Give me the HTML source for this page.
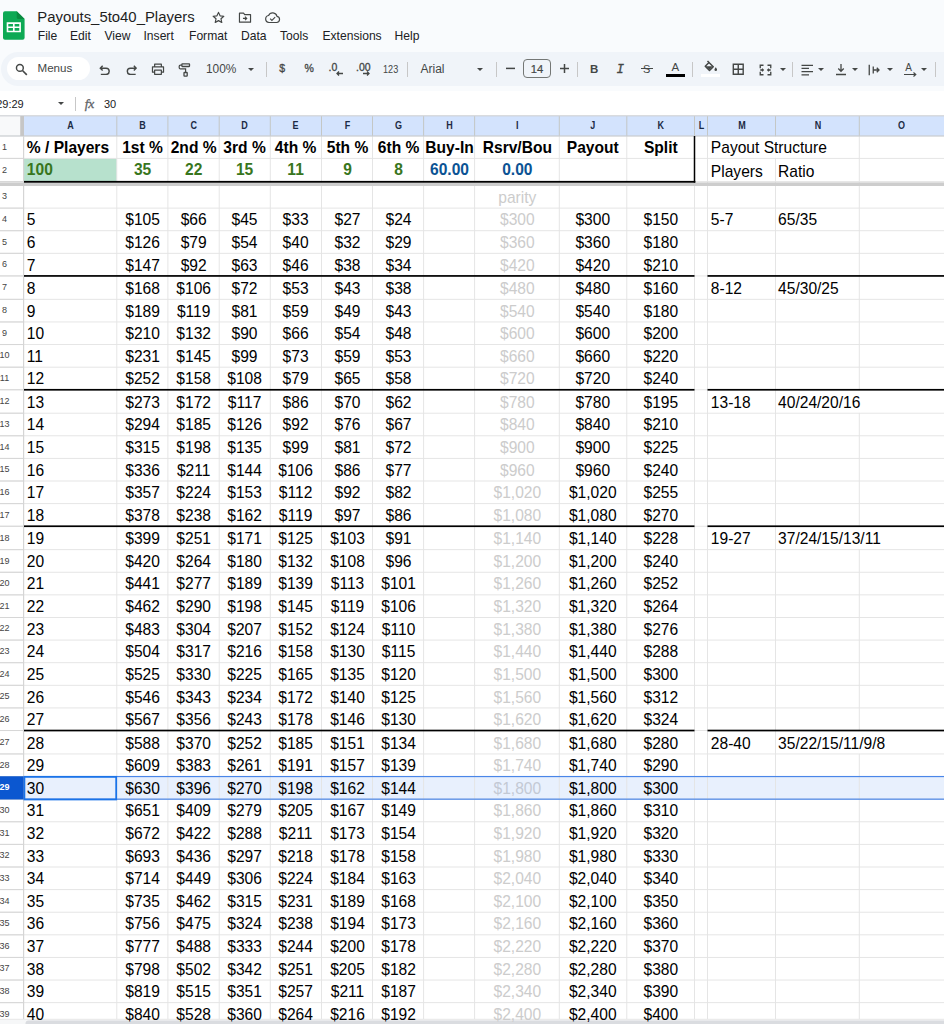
<!DOCTYPE html>
<html lang="en"><head><meta charset="utf-8"><title>Payouts_5to40_Players</title>
<style>
html,body{margin:0;padding:0}
body{width:944px;height:1024px;overflow:hidden;background:#f9fbfd;font-family:"Liberation Sans",sans-serif;position:relative;color:#000}
.abs{position:absolute}
.title{left:37.3px;top:7.5px;font-size:14.9px;color:#1f1f1f;white-space:nowrap;line-height:18px}
.menu{top:28.6px;font-size:12.1px;color:#202124;white-space:nowrap;line-height:14px}
.tb{font-size:11.6px;color:#444746;white-space:nowrap;line-height:14px}
.dd{width:0;height:0;border-left:3.3px solid transparent;border-right:3.3px solid transparent;border-top:3.6px solid #444746}
.sep{top:62px;width:1px;height:15px;background:#c7c7c7}
#grid{position:absolute;left:0;top:0}
.c{position:absolute;font-size:16.4px;transform:scaleX(0.95);line-height:22.61px;height:22.61px;white-space:nowrap;box-sizing:border-box}
.ac{text-align:center;transform-origin:50% 50%}
.al{text-align:left;padding-left:3px;transform-origin:0 50%}
.ar{text-align:right;padding-right:3px}
.b{font-weight:bold}
.ch{position:absolute;top:118.5px;height:14px;line-height:14px;transform:scaleX(0.9);font-size:10px;font-weight:bold;color:#1b2b45;text-align:center}
.rh{position:absolute;left:-8px;width:25px;height:14px;line-height:14px;font-size:9.8px;color:#444;text-align:center;transform:scaleX(0.92);margin-top:-0.4px}
.rs{color:#fff;font-weight:bold}
</style></head><body>
<!-- title bar -->
<svg class="abs" style="left:3.4px;top:10.5px" width="21.6" height="29" viewBox="0 0 44 58">
  <path d="M4 0h24l16 16v38a4 4 0 0 1-4 4H4a4 4 0 0 1-4-4V4a4 4 0 0 1 4-4z" fill="#0da954"/>
  <path d="M28 0l16 16H32a4 4 0 0 1-4-4z" fill="#0a8a40"/>
  <path d="M7.5 22.5h29v20.5h-29zM10.8 25.8v5.4h9.5v-5.4zM23.7 25.8v5.4h9.5v-5.4zM10.8 34.3v5.4h9.5v-5.4zM23.7 34.3v5.4h9.5v-5.4z" fill="#fff" fill-rule="evenodd"/>
</svg>
<div class="abs title">Payouts_5to40_Players</div>
<!-- star -->
<svg class="abs" style="left:211px;top:10px" width="15" height="15" viewBox="0 0 24 24"><path d="M12 3.8l2.5 5.5 6 .700-4.5 4.1 1.25 5.9L12 17l-5.25 3 1.25-5.9L3.5 10l6-.700z" fill="none" stroke="#444746" stroke-width="1.9" stroke-linejoin="round"/></svg>
<!-- move folder -->
<svg class="abs" style="left:238px;top:11px" width="14" height="13" viewBox="0 0 24 22"><path d="M2.5 3.5h7l2 2.5h10v13h-19z" fill="none" stroke="#444746" stroke-width="2" stroke-linejoin="round"/><path d="M8.5 12.5h6m-2.5-3l3 3-3 3" fill="none" stroke="#444746" stroke-width="1.9"/></svg>
<!-- cloud -->
<svg class="abs" style="left:264px;top:11px" width="17" height="13" viewBox="0 0 28 22"><path d="M8 19.5a6 6 0 0 1-.600-11.9 7.5 7.5 0 0 1 14.2 1.4 5.3 5.3 0 0 1-.600 10.5z" fill="none" stroke="#444746" stroke-width="2" stroke-linejoin="round"/><path d="M10 13l3 3 5.5-5.5" fill="none" stroke="#444746" stroke-width="1.9"/></svg>
<div class="abs menu" style="left:37.8px">File</div>
<div class="abs menu" style="left:70px">Edit</div>
<div class="abs menu" style="left:104.5px">View</div>
<div class="abs menu" style="left:143.5px">Insert</div>
<div class="abs menu" style="left:189px">Format</div>
<div class="abs menu" style="left:241px">Data</div>
<div class="abs menu" style="left:280px">Tools</div>
<div class="abs menu" style="left:322.5px">Extensions</div>
<div class="abs menu" style="left:394.5px">Help</div>
<!-- toolbar -->
<div class="abs" style="left:0.5px;top:52px;width:980px;height:34px;border-radius:17px;background:#f0f4f9"></div>
<div class="abs" style="left:6.8px;top:57px;width:83.5px;height:23.2px;border-radius:12px;background:#fff"></div>
<svg class="abs" style="left:15.2px;top:62.8px" width="13" height="13" viewBox="0 0 24 24"><circle cx="9" cy="9" r="6.3" fill="none" stroke="#444746" stroke-width="2.7"/><path d="M13.8 13.8l8 8" stroke="#444746" stroke-width="3"/></svg>
<div class="abs tb" style="left:37.5px;top:61px;">Menus</div>
<!-- undo -->
<svg class="abs" style="left:99px;top:63.8px" width="11.5" height="11.5" viewBox="0 0 22 22"><path d="M7 3.5L2.5 8 7 12.5M3 8h10.5a6 6 0 0 1 0 12H3.5" fill="none" stroke="#444746" stroke-width="2.7"/></svg>
<!-- redo -->
<svg class="abs" style="left:125.5px;top:63.8px" width="11.5" height="11.5" viewBox="0 0 22 22"><path d="M15 3.5L19.5 8 15 12.5M19 8H8.5a6 6 0 0 0 0 12h10" fill="none" stroke="#444746" stroke-width="2.7"/></svg>
<!-- print -->
<svg class="abs" style="left:151.3px;top:63.2px" width="14" height="12.5" viewBox="0 0 28 26"><path d="M7 8V2.5h14V8M7 19H2.5V8h23v11H21M7 15h14v8.5H7z" fill="none" stroke="#444746" stroke-width="2.5" stroke-linejoin="round"/></svg>
<!-- paint format -->
<svg class="abs" style="left:178px;top:62px" width="14" height="16" viewBox="0 0 14 16"><rect x="3.9" y="1.8" width="7.6" height="2.7" rx="0.4" fill="none" stroke="#444746" stroke-width="1.3"/><path d="M3.9 3.1H2.4a1.2 1.2 0 0 0-1.2 1.2v1.4a1.2 1.2 0 0 0 1.2 1.2h5.2v3.3" fill="none" stroke="#444746" stroke-width="1.2"/><rect x="6" y="10.5" width="3.2" height="3.7" rx="0.5" fill="none" stroke="#444746" stroke-width="1.3"/></svg>
<div class="abs tb" style="left:206px;top:62px;font-size:11.9px">100%</div>
<div class="abs dd" style="left:247.5px;top:67.8px"></div>
<div class="abs sep" style="left:265.5px"></div>
<div class="abs tb" style="left:279.3px;top:60.5px;font-size:10.5px;-webkit-text-stroke:0.3px #444746">$</div>
<div class="abs tb" style="left:304.5px;top:60.5px;font-size:10.5px;-webkit-text-stroke:0.3px #444746">%</div>
<div class="abs tb" style="left:328.5px;top:60px;font-size:10.5px;-webkit-text-stroke:0.3px #444746">.0</div>
<svg class="abs" style="left:335.5px;top:70.8px" width="7" height="5" viewBox="0 0 14 10"><path d="M14 5H2.5M6 1L2 5l4 4" fill="none" stroke="#444746" stroke-width="2.6"/></svg>
<div class="abs tb" style="left:356px;top:60px;font-size:10.5px;-webkit-text-stroke:0.3px #444746">.00</div>
<svg class="abs" style="left:363.2px;top:70.8px" width="7" height="5" viewBox="0 0 14 10"><path d="M0 5h11.5M8 1l4 4-4 4" fill="none" stroke="#444746" stroke-width="2.6"/></svg>
<div class="abs tb" style="left:382.5px;top:62px;font-size:10.6px;transform:scaleX(0.86);transform-origin:0 50%">123</div>
<div class="abs sep" style="left:407px"></div>
<div class="abs tb" style="left:420.5px;top:61.5px;font-size:12px">Arial</div>
<div class="abs dd" style="left:476.6px;top:67.8px"></div>
<div class="abs sep" style="left:495.8px"></div>
<svg class="abs" style="left:505px;top:63px" width="11" height="11" viewBox="0 0 11 11"><path d="M1 5.4h9" stroke="#444746" stroke-width="1.5"/></svg>
<div class="abs" style="left:523px;top:58.8px;width:28px;height:19.7px;border:1px solid #747775;border-radius:4px;box-sizing:border-box"></div>
<div class="abs tb" style="left:523px;top:62px;width:28px;text-align:center;font-size:11.2px;-webkit-text-stroke:0.2px #444746">14</div>
<svg class="abs" style="left:558.5px;top:63px" width="11" height="11" viewBox="0 0 11 11"><path d="M1 5.4h9M5.5 0.9v9" stroke="#444746" stroke-width="1.5"/></svg>
<div class="abs sep" style="left:576.8px"></div>
<div class="abs tb" style="left:590px;top:61.5px;font-size:11.5px;font-weight:bold">B</div>
<div class="abs tb" style="left:616.5px;top:63px;font-size:12.5px;font-style:italic;font-family:'Liberation Mono',monospace;-webkit-text-stroke:0.35px #444746">I</div>
<div class="abs tb" style="left:643px;top:61.5px;font-size:11px">S</div>
<div class="abs" style="left:640.5px;top:68.3px;width:12.5px;height:1.2px;background:#444746"></div>
<div class="abs tb" style="left:671.5px;top:59.5px;font-size:11.5px">A</div>
<div class="abs" style="left:665.5px;top:74px;width:19px;height:2.5px;background:#000"></div>
<div class="abs sep" style="left:692px"></div>
<!-- fill -->
<svg class="abs" style="left:703.5px;top:60px" width="14" height="12" viewBox="0 0 28 24"><path d="M7 2l11.5 11.5-7.5 7.5-8.5-8.5 8.5-8.5" fill="none" stroke="#444746" stroke-width="3" stroke-linejoin="round"/><path d="M3 12.5h15l-7 7z" fill="#444746"/><path d="M23.5 14.5c1.8 2.5 2.6 3.8 2.6 5a2.6 2.6 0 0 1-5.2 0c0-1.2.8-2.5 2.6-5z" fill="#444746"/></svg>
<div class="abs" style="left:701px;top:74px;width:19px;height:2.5px;background:#fff"></div>
<!-- borders -->
<svg class="abs" style="left:732px;top:63px" width="12.5" height="12.5" viewBox="0 0 24 24"><path d="M2.5 2.5h19v19h-19zM12 2.5v19M2.5 12h19" fill="none" stroke="#444746" stroke-width="2.7"/></svg>
<!-- merge -->
<svg class="abs" style="left:759px;top:63.5px" width="13" height="12" viewBox="0 0 26 24"><path d="M9 2.5H2.5v6M17 2.5h6.5v6M9 21.5H2.5v-6M17 21.5h6.5v-6M2.5 12h6m-2.5-2.5l2.5 2.5-2.5 2.5M23.5 12h-6m2.5-2.5l-2.5 2.5 2.5 2.5" fill="none" stroke="#444746" stroke-width="2.7"/></svg>
<div class="abs dd" style="left:779.5px;top:67.8px"></div>
<div class="abs sep" style="left:792px"></div>
<!-- halign -->
<svg class="abs" style="left:800.5px;top:63.5px" width="12.5" height="12" viewBox="0 0 25 24"><path d="M1 2.5h23M1 8.8h15M1 15.2h23M1 21.5h15" stroke="#444746" stroke-width="2.5"/></svg>
<div class="abs dd" style="left:817.5px;top:67.8px"></div>
<!-- valign -->
<svg class="abs" style="left:835px;top:63px" width="12" height="13" viewBox="0 0 24 26"><path d="M12 2v14M6.5 11l5.5 5.5 5.5-5.5M2 23h20" fill="none" stroke="#444746" stroke-width="2.6"/></svg>
<div class="abs dd" style="left:852px;top:67.8px"></div>
<!-- wrap -->
<svg class="abs" style="left:868px;top:63.5px" width="12" height="12" viewBox="0 0 24 24"><path d="M2.5 1.5v21M10.5 5v14M10.5 12h11M17.5 7.5l4.5 4.5-4.5 4.5" fill="none" stroke="#444746" stroke-width="2.6"/></svg>
<div class="abs dd" style="left:886.5px;top:67.8px"></div>
<!-- rotate -->
<div class="abs tb" style="left:905.3px;top:61.3px;font-size:10px">A</div>
<svg class="abs" style="left:903.5px;top:71.5px" width="13" height="5" viewBox="0 0 26 10"><path d="M0 5h23M19 1l4.5 4-4.5 4" fill="none" stroke="#444746" stroke-width="2.4"/></svg>
<div class="abs dd" style="left:921px;top:67.8px"></div>
<div class="abs sep" style="left:935px"></div>
<!-- formula bar -->
<div class="abs" style="left:0;top:90.8px;width:944px;height:25px;background:#fff"></div>
<div class="abs tb" style="left:-3.8px;top:97px;font-size:11px;color:#202124">29:29</div>
<div class="abs dd" style="left:57.5px;top:102px"></div>
<div class="abs" style="left:74.5px;top:96.5px;width:1px;height:14.5px;background:#c7c7c7"></div>
<div class="abs" style="left:84.8px;top:96px;font:italic 13.5px 'Liberation Serif',serif;color:#5f6368;letter-spacing:-0.3px;-webkit-text-stroke:0.3px #5f6368">fx</div>
<div class="abs tb" style="left:104px;top:97px;font-size:11px;color:#202124">30</div>

<svg id="grid" width="944" height="1024" viewBox="0 0 944 1024">
<rect x="0.00" y="116.00" width="944.00" height="908.00" fill="#ffffff" />
<rect x="0.00" y="116.00" width="20.00" height="908.00" fill="#ffffff" />
<rect x="0.00" y="116.00" width="20.00" height="20.00" fill="#f8f9fa" />
<rect x="24.00" y="116.00" width="920.00" height="20.00" fill="#d3e3fd" />
<rect x="24.00" y="158.40" width="92.80" height="22.80" fill="#b7e1cd" />
<rect x="24.00" y="776.55" width="920.00" height="22.61" fill="#e8f0fd" />
<rect x="0.00" y="157.93" width="944.00" height="0.95" fill="#e4e4e4"/>
<rect x="0.00" y="157.90" width="23.50" height="1.00" fill="#d6d6d6"/>
<rect x="0.00" y="181.12" width="944.00" height="0.95" fill="#e4e4e4"/>
<rect x="0.00" y="181.10" width="23.50" height="1.00" fill="#d6d6d6"/>
<rect x="0.00" y="207.62" width="944.00" height="0.95" fill="#e4e4e4"/>
<rect x="0.00" y="207.60" width="23.50" height="1.00" fill="#d6d6d6"/>
<rect x="0.00" y="230.23" width="944.00" height="0.95" fill="#e4e4e4"/>
<rect x="0.00" y="230.21" width="23.50" height="1.00" fill="#d6d6d6"/>
<rect x="0.00" y="252.84" width="944.00" height="0.95" fill="#e4e4e4"/>
<rect x="0.00" y="252.82" width="23.50" height="1.00" fill="#d6d6d6"/>
<rect x="0.00" y="275.45" width="944.00" height="0.95" fill="#e4e4e4"/>
<rect x="0.00" y="275.43" width="23.50" height="1.00" fill="#d6d6d6"/>
<rect x="0.00" y="298.86" width="944.00" height="0.95" fill="#e4e4e4"/>
<rect x="0.00" y="298.84" width="23.50" height="1.00" fill="#d6d6d6"/>
<rect x="0.00" y="321.47" width="944.00" height="0.95" fill="#e4e4e4"/>
<rect x="0.00" y="321.45" width="23.50" height="1.00" fill="#d6d6d6"/>
<rect x="0.00" y="344.08" width="944.00" height="0.95" fill="#e4e4e4"/>
<rect x="0.00" y="344.06" width="23.50" height="1.00" fill="#d6d6d6"/>
<rect x="0.00" y="366.69" width="944.00" height="0.95" fill="#e4e4e4"/>
<rect x="0.00" y="366.67" width="23.50" height="1.00" fill="#d6d6d6"/>
<rect x="0.00" y="389.31" width="944.00" height="0.95" fill="#e4e4e4"/>
<rect x="0.00" y="389.28" width="23.50" height="1.00" fill="#d6d6d6"/>
<rect x="0.00" y="412.72" width="944.00" height="0.95" fill="#e4e4e4"/>
<rect x="0.00" y="412.69" width="23.50" height="1.00" fill="#d6d6d6"/>
<rect x="0.00" y="435.32" width="944.00" height="0.95" fill="#e4e4e4"/>
<rect x="0.00" y="435.30" width="23.50" height="1.00" fill="#d6d6d6"/>
<rect x="0.00" y="457.93" width="944.00" height="0.95" fill="#e4e4e4"/>
<rect x="0.00" y="457.91" width="23.50" height="1.00" fill="#d6d6d6"/>
<rect x="0.00" y="480.54" width="944.00" height="0.95" fill="#e4e4e4"/>
<rect x="0.00" y="480.52" width="23.50" height="1.00" fill="#d6d6d6"/>
<rect x="0.00" y="503.15" width="944.00" height="0.95" fill="#e4e4e4"/>
<rect x="0.00" y="503.13" width="23.50" height="1.00" fill="#d6d6d6"/>
<rect x="0.00" y="525.76" width="944.00" height="0.95" fill="#e4e4e4"/>
<rect x="0.00" y="525.74" width="23.50" height="1.00" fill="#d6d6d6"/>
<rect x="0.00" y="549.17" width="944.00" height="0.95" fill="#e4e4e4"/>
<rect x="0.00" y="549.15" width="23.50" height="1.00" fill="#d6d6d6"/>
<rect x="0.00" y="571.78" width="944.00" height="0.95" fill="#e4e4e4"/>
<rect x="0.00" y="571.76" width="23.50" height="1.00" fill="#d6d6d6"/>
<rect x="0.00" y="594.39" width="944.00" height="0.95" fill="#e4e4e4"/>
<rect x="0.00" y="594.37" width="23.50" height="1.00" fill="#d6d6d6"/>
<rect x="0.00" y="617.00" width="944.00" height="0.95" fill="#e4e4e4"/>
<rect x="0.00" y="616.98" width="23.50" height="1.00" fill="#d6d6d6"/>
<rect x="0.00" y="639.61" width="944.00" height="0.95" fill="#e4e4e4"/>
<rect x="0.00" y="639.59" width="23.50" height="1.00" fill="#d6d6d6"/>
<rect x="0.00" y="662.22" width="944.00" height="0.95" fill="#e4e4e4"/>
<rect x="0.00" y="662.20" width="23.50" height="1.00" fill="#d6d6d6"/>
<rect x="0.00" y="684.83" width="944.00" height="0.95" fill="#e4e4e4"/>
<rect x="0.00" y="684.81" width="23.50" height="1.00" fill="#d6d6d6"/>
<rect x="0.00" y="707.44" width="944.00" height="0.95" fill="#e4e4e4"/>
<rect x="0.00" y="707.42" width="23.50" height="1.00" fill="#d6d6d6"/>
<rect x="0.00" y="730.05" width="944.00" height="0.95" fill="#e4e4e4"/>
<rect x="0.00" y="730.03" width="23.50" height="1.00" fill="#d6d6d6"/>
<rect x="0.00" y="753.47" width="944.00" height="0.95" fill="#e4e4e4"/>
<rect x="0.00" y="753.44" width="23.50" height="1.00" fill="#d6d6d6"/>
<rect x="0.00" y="776.08" width="944.00" height="0.95" fill="#e4e4e4"/>
<rect x="0.00" y="776.05" width="23.50" height="1.00" fill="#d6d6d6"/>
<rect x="0.00" y="798.69" width="944.00" height="0.95" fill="#e4e4e4"/>
<rect x="0.00" y="798.66" width="23.50" height="1.00" fill="#d6d6d6"/>
<rect x="0.00" y="821.30" width="944.00" height="0.95" fill="#e4e4e4"/>
<rect x="0.00" y="821.27" width="23.50" height="1.00" fill="#d6d6d6"/>
<rect x="0.00" y="843.90" width="944.00" height="0.95" fill="#e4e4e4"/>
<rect x="0.00" y="843.88" width="23.50" height="1.00" fill="#d6d6d6"/>
<rect x="0.00" y="866.51" width="944.00" height="0.95" fill="#e4e4e4"/>
<rect x="0.00" y="866.49" width="23.50" height="1.00" fill="#d6d6d6"/>
<rect x="0.00" y="889.12" width="944.00" height="0.95" fill="#e4e4e4"/>
<rect x="0.00" y="889.10" width="23.50" height="1.00" fill="#d6d6d6"/>
<rect x="0.00" y="911.74" width="944.00" height="0.95" fill="#e4e4e4"/>
<rect x="0.00" y="911.71" width="23.50" height="1.00" fill="#d6d6d6"/>
<rect x="0.00" y="934.35" width="944.00" height="0.95" fill="#e4e4e4"/>
<rect x="0.00" y="934.32" width="23.50" height="1.00" fill="#d6d6d6"/>
<rect x="0.00" y="956.96" width="944.00" height="0.95" fill="#e4e4e4"/>
<rect x="0.00" y="956.93" width="23.50" height="1.00" fill="#d6d6d6"/>
<rect x="0.00" y="979.57" width="944.00" height="0.95" fill="#e4e4e4"/>
<rect x="0.00" y="979.54" width="23.50" height="1.00" fill="#d6d6d6"/>
<rect x="0.00" y="1002.18" width="944.00" height="0.95" fill="#e4e4e4"/>
<rect x="0.00" y="1002.15" width="23.50" height="1.00" fill="#d6d6d6"/>
<rect x="0.00" y="1024.79" width="944.00" height="0.95" fill="#e4e4e4"/>
<rect x="0.00" y="1024.76" width="23.50" height="1.00" fill="#d6d6d6"/>
<rect x="116.33" y="136.00" width="0.95" height="888.00" fill="#e4e4e4"/>
<rect x="167.43" y="136.00" width="0.95" height="888.00" fill="#e4e4e4"/>
<rect x="218.72" y="136.00" width="0.95" height="888.00" fill="#e4e4e4"/>
<rect x="269.82" y="136.00" width="0.95" height="888.00" fill="#e4e4e4"/>
<rect x="321.02" y="136.00" width="0.95" height="888.00" fill="#e4e4e4"/>
<rect x="372.02" y="136.00" width="0.95" height="888.00" fill="#e4e4e4"/>
<rect x="423.12" y="136.00" width="0.95" height="888.00" fill="#e4e4e4"/>
<rect x="474.12" y="136.00" width="0.95" height="888.00" fill="#e4e4e4"/>
<rect x="558.82" y="136.00" width="0.95" height="888.00" fill="#e4e4e4"/>
<rect x="626.32" y="136.00" width="0.95" height="888.00" fill="#e4e4e4"/>
<rect x="694.02" y="136.00" width="0.95" height="888.00" fill="#e4e4e4"/>
<rect x="707.02" y="136.00" width="0.95" height="888.00" fill="#e4e4e4"/>
<rect x="775.02" y="136.00" width="0.95" height="888.00" fill="#e4e4e4"/>
<rect x="858.82" y="136.00" width="0.95" height="888.00" fill="#e4e4e4"/>
<rect x="774.50" y="136.60" width="2.00" height="21.20" fill="#ffffff" />
<rect x="858.30" y="390.38" width="2.00" height="22.21" fill="#ffffff" />
<rect x="858.30" y="526.84" width="2.00" height="22.21" fill="#ffffff" />
<rect x="858.30" y="731.13" width="2.00" height="22.21" fill="#ffffff" />
<rect x="116.30" y="116.00" width="1.00" height="20.00" fill="#c4c7c5"/>
<rect x="167.40" y="116.00" width="1.00" height="20.00" fill="#c4c7c5"/>
<rect x="218.70" y="116.00" width="1.00" height="20.00" fill="#c4c7c5"/>
<rect x="269.80" y="116.00" width="1.00" height="20.00" fill="#c4c7c5"/>
<rect x="321.00" y="116.00" width="1.00" height="20.00" fill="#c4c7c5"/>
<rect x="372.00" y="116.00" width="1.00" height="20.00" fill="#c4c7c5"/>
<rect x="423.10" y="116.00" width="1.00" height="20.00" fill="#c4c7c5"/>
<rect x="474.10" y="116.00" width="1.00" height="20.00" fill="#c4c7c5"/>
<rect x="558.80" y="116.00" width="1.00" height="20.00" fill="#c4c7c5"/>
<rect x="626.30" y="116.00" width="1.00" height="20.00" fill="#c4c7c5"/>
<rect x="694.00" y="116.00" width="1.00" height="20.00" fill="#c4c7c5"/>
<rect x="707.00" y="116.00" width="1.00" height="20.00" fill="#c4c7c5"/>
<rect x="775.00" y="116.00" width="1.00" height="20.00" fill="#c4c7c5"/>
<rect x="858.80" y="116.00" width="1.00" height="20.00" fill="#c4c7c5"/>
<rect x="0.00" y="115.20" width="944.00" height="1.20" fill="#d0d3d6"/>
<rect x="0.00" y="135.40" width="944.00" height="1.20" fill="#c9ccd0"/>
<rect x="23.00" y="136.00" width="1.20" height="888.00" fill="#d5d5d5"/>
<rect x="20.20" y="116.00" width="3.80" height="20.00" fill="#c6c6c6" />
<rect x="0.00" y="182.40" width="944.00" height="3.60" fill="#cdcdcd" />
<rect x="24.00" y="275.08" width="670.50" height="1.70" fill="#000000"/>
<rect x="707.50" y="275.08" width="236.50" height="1.70" fill="#000000"/>
<rect x="24.00" y="388.93" width="670.50" height="1.70" fill="#000000"/>
<rect x="707.50" y="388.93" width="236.50" height="1.70" fill="#000000"/>
<rect x="24.00" y="525.39" width="670.50" height="1.70" fill="#000000"/>
<rect x="707.50" y="525.39" width="236.50" height="1.70" fill="#000000"/>
<rect x="24.00" y="729.68" width="670.50" height="1.70" fill="#000000"/>
<rect x="707.50" y="729.68" width="236.50" height="1.70" fill="#000000"/>
<rect x="24.00" y="180.90" width="671.30" height="1.80" fill="#000000" />
<rect x="693.75" y="136.00" width="1.50" height="46.60" fill="#000000"/>
<rect x="24.00" y="775.95" width="920.00" height="1.20" fill="#4a86e8"/>
<rect x="24.00" y="798.56" width="920.00" height="1.20" fill="#4a86e8"/>
<rect x="24.40" y="776.85" width="91.80" height="22.61" fill="none" stroke="#1a73e8" stroke-width="1.8"/>
<rect x="0.00" y="776.25" width="23.60" height="23.21" fill="#0b57d0" />
<rect x="0.00" y="1019.00" width="944.00" height="5.00" fill="#f6f7f8" />
<rect x="0.00" y="1018.80" width="944.00" height="0.80" fill="#e3e3e3"/>
<rect x="25.50" y="1020.60" width="944.00" height="8.00" fill="#dadce0" rx="3"/>
</svg>
<div class="c al b" style="left:24.00px;top:135.99px;width:92.80px;">% / Players</div>
<div class="c ac b" style="left:116.80px;top:135.99px;width:51.10px;">1st %</div>
<div class="c ac b" style="left:167.90px;top:135.99px;width:51.30px;">2nd %</div>
<div class="c ac b" style="left:219.20px;top:135.99px;width:51.10px;">3rd %</div>
<div class="c ac b" style="left:270.30px;top:135.99px;width:51.20px;">4th %</div>
<div class="c ac b" style="left:321.50px;top:135.99px;width:51.00px;">5th %</div>
<div class="c ac b" style="left:372.50px;top:135.99px;width:51.10px;">6th %</div>
<div class="c ac b" style="left:423.60px;top:135.99px;width:51.00px;">Buy-In</div>
<div class="c ac b" style="left:474.60px;top:135.99px;width:84.70px;">Rsrv/Bou</div>
<div class="c ac b" style="left:559.30px;top:135.99px;width:67.50px;">Payout</div>
<div class="c ac b" style="left:626.80px;top:135.99px;width:67.70px;">Split</div>
<div class="c al" style="left:707.50px;top:135.99px;width:151.80px;">Payout Structure</div>
<div class="c al b" style="left:24.00px;top:158.49px;width:92.80px;color:#38761d;">100</div>
<div class="c ac b" style="left:116.80px;top:158.49px;width:51.10px;color:#38761d;">35</div>
<div class="c ac b" style="left:167.90px;top:158.49px;width:51.30px;color:#38761d;">22</div>
<div class="c ac b" style="left:219.20px;top:158.49px;width:51.10px;color:#38761d;">15</div>
<div class="c ac b" style="left:270.30px;top:158.49px;width:51.20px;color:#38761d;">11</div>
<div class="c ac b" style="left:321.50px;top:158.49px;width:51.00px;color:#38761d;">9</div>
<div class="c ac b" style="left:372.50px;top:158.49px;width:51.10px;color:#38761d;">8</div>
<div class="c ac b" style="left:423.60px;top:158.49px;width:51.00px;color:#0b5394;">60.00</div>
<div class="c ac b" style="left:474.60px;top:158.49px;width:84.70px;color:#0b5394;">0.00</div>
<div class="c al" style="left:707.50px;top:160.19px;width:68.00px;">Players</div>
<div class="c al" style="left:775.50px;top:160.19px;width:83.80px;padding-left:2.2px;">Ratio</div>
<div class="c ac" style="left:474.60px;top:185.69px;width:84.70px;color:#cccccc;">parity</div>
<div class="c al" style="left:24.00px;top:208.30px;width:92.80px;">5</div>
<div class="c ac" style="left:116.80px;top:208.30px;width:51.10px;">$105</div>
<div class="c ac" style="left:167.90px;top:208.30px;width:51.30px;">$66</div>
<div class="c ac" style="left:219.20px;top:208.30px;width:51.10px;">$45</div>
<div class="c ac" style="left:270.30px;top:208.30px;width:51.20px;">$33</div>
<div class="c ac" style="left:321.50px;top:208.30px;width:51.00px;">$27</div>
<div class="c ac" style="left:372.50px;top:208.30px;width:51.10px;">$24</div>
<div class="c ac" style="left:474.60px;top:208.30px;width:84.70px;color:#cccccc;">$300</div>
<div class="c ac" style="left:559.30px;top:208.30px;width:67.50px;">$300</div>
<div class="c ac" style="left:626.80px;top:208.30px;width:67.70px;">$150</div>
<div class="c al" style="left:24.00px;top:230.91px;width:92.80px;">6</div>
<div class="c ac" style="left:116.80px;top:230.91px;width:51.10px;">$126</div>
<div class="c ac" style="left:167.90px;top:230.91px;width:51.30px;">$79</div>
<div class="c ac" style="left:219.20px;top:230.91px;width:51.10px;">$54</div>
<div class="c ac" style="left:270.30px;top:230.91px;width:51.20px;">$40</div>
<div class="c ac" style="left:321.50px;top:230.91px;width:51.00px;">$32</div>
<div class="c ac" style="left:372.50px;top:230.91px;width:51.10px;">$29</div>
<div class="c ac" style="left:474.60px;top:230.91px;width:84.70px;color:#cccccc;">$360</div>
<div class="c ac" style="left:559.30px;top:230.91px;width:67.50px;">$360</div>
<div class="c ac" style="left:626.80px;top:230.91px;width:67.70px;">$180</div>
<div class="c al" style="left:24.00px;top:253.52px;width:92.80px;">7</div>
<div class="c ac" style="left:116.80px;top:253.52px;width:51.10px;">$147</div>
<div class="c ac" style="left:167.90px;top:253.52px;width:51.30px;">$92</div>
<div class="c ac" style="left:219.20px;top:253.52px;width:51.10px;">$63</div>
<div class="c ac" style="left:270.30px;top:253.52px;width:51.20px;">$46</div>
<div class="c ac" style="left:321.50px;top:253.52px;width:51.00px;">$38</div>
<div class="c ac" style="left:372.50px;top:253.52px;width:51.10px;">$34</div>
<div class="c ac" style="left:474.60px;top:253.52px;width:84.70px;color:#cccccc;">$420</div>
<div class="c ac" style="left:559.30px;top:253.52px;width:67.50px;">$420</div>
<div class="c ac" style="left:626.80px;top:253.52px;width:67.70px;">$210</div>
<div class="c al" style="left:24.00px;top:276.93px;width:92.80px;">8</div>
<div class="c ac" style="left:116.80px;top:276.93px;width:51.10px;">$168</div>
<div class="c ac" style="left:167.90px;top:276.93px;width:51.30px;">$106</div>
<div class="c ac" style="left:219.20px;top:276.93px;width:51.10px;">$72</div>
<div class="c ac" style="left:270.30px;top:276.93px;width:51.20px;">$53</div>
<div class="c ac" style="left:321.50px;top:276.93px;width:51.00px;">$43</div>
<div class="c ac" style="left:372.50px;top:276.93px;width:51.10px;">$38</div>
<div class="c ac" style="left:474.60px;top:276.93px;width:84.70px;color:#cccccc;">$480</div>
<div class="c ac" style="left:559.30px;top:276.93px;width:67.50px;">$480</div>
<div class="c ac" style="left:626.80px;top:276.93px;width:67.70px;">$160</div>
<div class="c al" style="left:24.00px;top:299.54px;width:92.80px;">9</div>
<div class="c ac" style="left:116.80px;top:299.54px;width:51.10px;">$189</div>
<div class="c ac" style="left:167.90px;top:299.54px;width:51.30px;">$119</div>
<div class="c ac" style="left:219.20px;top:299.54px;width:51.10px;">$81</div>
<div class="c ac" style="left:270.30px;top:299.54px;width:51.20px;">$59</div>
<div class="c ac" style="left:321.50px;top:299.54px;width:51.00px;">$49</div>
<div class="c ac" style="left:372.50px;top:299.54px;width:51.10px;">$43</div>
<div class="c ac" style="left:474.60px;top:299.54px;width:84.70px;color:#cccccc;">$540</div>
<div class="c ac" style="left:559.30px;top:299.54px;width:67.50px;">$540</div>
<div class="c ac" style="left:626.80px;top:299.54px;width:67.70px;">$180</div>
<div class="c al" style="left:24.00px;top:322.15px;width:92.80px;">10</div>
<div class="c ac" style="left:116.80px;top:322.15px;width:51.10px;">$210</div>
<div class="c ac" style="left:167.90px;top:322.15px;width:51.30px;">$132</div>
<div class="c ac" style="left:219.20px;top:322.15px;width:51.10px;">$90</div>
<div class="c ac" style="left:270.30px;top:322.15px;width:51.20px;">$66</div>
<div class="c ac" style="left:321.50px;top:322.15px;width:51.00px;">$54</div>
<div class="c ac" style="left:372.50px;top:322.15px;width:51.10px;">$48</div>
<div class="c ac" style="left:474.60px;top:322.15px;width:84.70px;color:#cccccc;">$600</div>
<div class="c ac" style="left:559.30px;top:322.15px;width:67.50px;">$600</div>
<div class="c ac" style="left:626.80px;top:322.15px;width:67.70px;">$200</div>
<div class="c al" style="left:24.00px;top:344.76px;width:92.80px;">11</div>
<div class="c ac" style="left:116.80px;top:344.76px;width:51.10px;">$231</div>
<div class="c ac" style="left:167.90px;top:344.76px;width:51.30px;">$145</div>
<div class="c ac" style="left:219.20px;top:344.76px;width:51.10px;">$99</div>
<div class="c ac" style="left:270.30px;top:344.76px;width:51.20px;">$73</div>
<div class="c ac" style="left:321.50px;top:344.76px;width:51.00px;">$59</div>
<div class="c ac" style="left:372.50px;top:344.76px;width:51.10px;">$53</div>
<div class="c ac" style="left:474.60px;top:344.76px;width:84.70px;color:#cccccc;">$660</div>
<div class="c ac" style="left:559.30px;top:344.76px;width:67.50px;">$660</div>
<div class="c ac" style="left:626.80px;top:344.76px;width:67.70px;">$220</div>
<div class="c al" style="left:24.00px;top:367.37px;width:92.80px;">12</div>
<div class="c ac" style="left:116.80px;top:367.37px;width:51.10px;">$252</div>
<div class="c ac" style="left:167.90px;top:367.37px;width:51.30px;">$158</div>
<div class="c ac" style="left:219.20px;top:367.37px;width:51.10px;">$108</div>
<div class="c ac" style="left:270.30px;top:367.37px;width:51.20px;">$79</div>
<div class="c ac" style="left:321.50px;top:367.37px;width:51.00px;">$65</div>
<div class="c ac" style="left:372.50px;top:367.37px;width:51.10px;">$58</div>
<div class="c ac" style="left:474.60px;top:367.37px;width:84.70px;color:#cccccc;">$720</div>
<div class="c ac" style="left:559.30px;top:367.37px;width:67.50px;">$720</div>
<div class="c ac" style="left:626.80px;top:367.37px;width:67.70px;">$240</div>
<div class="c al" style="left:24.00px;top:390.78px;width:92.80px;">13</div>
<div class="c ac" style="left:116.80px;top:390.78px;width:51.10px;">$273</div>
<div class="c ac" style="left:167.90px;top:390.78px;width:51.30px;">$172</div>
<div class="c ac" style="left:219.20px;top:390.78px;width:51.10px;">$117</div>
<div class="c ac" style="left:270.30px;top:390.78px;width:51.20px;">$86</div>
<div class="c ac" style="left:321.50px;top:390.78px;width:51.00px;">$70</div>
<div class="c ac" style="left:372.50px;top:390.78px;width:51.10px;">$62</div>
<div class="c ac" style="left:474.60px;top:390.78px;width:84.70px;color:#cccccc;">$780</div>
<div class="c ac" style="left:559.30px;top:390.78px;width:67.50px;">$780</div>
<div class="c ac" style="left:626.80px;top:390.78px;width:67.70px;">$195</div>
<div class="c al" style="left:24.00px;top:413.39px;width:92.80px;">14</div>
<div class="c ac" style="left:116.80px;top:413.39px;width:51.10px;">$294</div>
<div class="c ac" style="left:167.90px;top:413.39px;width:51.30px;">$185</div>
<div class="c ac" style="left:219.20px;top:413.39px;width:51.10px;">$126</div>
<div class="c ac" style="left:270.30px;top:413.39px;width:51.20px;">$92</div>
<div class="c ac" style="left:321.50px;top:413.39px;width:51.00px;">$76</div>
<div class="c ac" style="left:372.50px;top:413.39px;width:51.10px;">$67</div>
<div class="c ac" style="left:474.60px;top:413.39px;width:84.70px;color:#cccccc;">$840</div>
<div class="c ac" style="left:559.30px;top:413.39px;width:67.50px;">$840</div>
<div class="c ac" style="left:626.80px;top:413.39px;width:67.70px;">$210</div>
<div class="c al" style="left:24.00px;top:436.00px;width:92.80px;">15</div>
<div class="c ac" style="left:116.80px;top:436.00px;width:51.10px;">$315</div>
<div class="c ac" style="left:167.90px;top:436.00px;width:51.30px;">$198</div>
<div class="c ac" style="left:219.20px;top:436.00px;width:51.10px;">$135</div>
<div class="c ac" style="left:270.30px;top:436.00px;width:51.20px;">$99</div>
<div class="c ac" style="left:321.50px;top:436.00px;width:51.00px;">$81</div>
<div class="c ac" style="left:372.50px;top:436.00px;width:51.10px;">$72</div>
<div class="c ac" style="left:474.60px;top:436.00px;width:84.70px;color:#cccccc;">$900</div>
<div class="c ac" style="left:559.30px;top:436.00px;width:67.50px;">$900</div>
<div class="c ac" style="left:626.80px;top:436.00px;width:67.70px;">$225</div>
<div class="c al" style="left:24.00px;top:458.61px;width:92.80px;">16</div>
<div class="c ac" style="left:116.80px;top:458.61px;width:51.10px;">$336</div>
<div class="c ac" style="left:167.90px;top:458.61px;width:51.30px;">$211</div>
<div class="c ac" style="left:219.20px;top:458.61px;width:51.10px;">$144</div>
<div class="c ac" style="left:270.30px;top:458.61px;width:51.20px;">$106</div>
<div class="c ac" style="left:321.50px;top:458.61px;width:51.00px;">$86</div>
<div class="c ac" style="left:372.50px;top:458.61px;width:51.10px;">$77</div>
<div class="c ac" style="left:474.60px;top:458.61px;width:84.70px;color:#cccccc;">$960</div>
<div class="c ac" style="left:559.30px;top:458.61px;width:67.50px;">$960</div>
<div class="c ac" style="left:626.80px;top:458.61px;width:67.70px;">$240</div>
<div class="c al" style="left:24.00px;top:481.22px;width:92.80px;">17</div>
<div class="c ac" style="left:116.80px;top:481.22px;width:51.10px;">$357</div>
<div class="c ac" style="left:167.90px;top:481.22px;width:51.30px;">$224</div>
<div class="c ac" style="left:219.20px;top:481.22px;width:51.10px;">$153</div>
<div class="c ac" style="left:270.30px;top:481.22px;width:51.20px;">$112</div>
<div class="c ac" style="left:321.50px;top:481.22px;width:51.00px;">$92</div>
<div class="c ac" style="left:372.50px;top:481.22px;width:51.10px;">$82</div>
<div class="c ac" style="left:474.60px;top:481.22px;width:84.70px;color:#cccccc;">$1,020</div>
<div class="c ac" style="left:559.30px;top:481.22px;width:67.50px;">$1,020</div>
<div class="c ac" style="left:626.80px;top:481.22px;width:67.70px;">$255</div>
<div class="c al" style="left:24.00px;top:503.83px;width:92.80px;">18</div>
<div class="c ac" style="left:116.80px;top:503.83px;width:51.10px;">$378</div>
<div class="c ac" style="left:167.90px;top:503.83px;width:51.30px;">$238</div>
<div class="c ac" style="left:219.20px;top:503.83px;width:51.10px;">$162</div>
<div class="c ac" style="left:270.30px;top:503.83px;width:51.20px;">$119</div>
<div class="c ac" style="left:321.50px;top:503.83px;width:51.00px;">$97</div>
<div class="c ac" style="left:372.50px;top:503.83px;width:51.10px;">$86</div>
<div class="c ac" style="left:474.60px;top:503.83px;width:84.70px;color:#cccccc;">$1,080</div>
<div class="c ac" style="left:559.30px;top:503.83px;width:67.50px;">$1,080</div>
<div class="c ac" style="left:626.80px;top:503.83px;width:67.70px;">$270</div>
<div class="c al" style="left:24.00px;top:527.24px;width:92.80px;">19</div>
<div class="c ac" style="left:116.80px;top:527.24px;width:51.10px;">$399</div>
<div class="c ac" style="left:167.90px;top:527.24px;width:51.30px;">$251</div>
<div class="c ac" style="left:219.20px;top:527.24px;width:51.10px;">$171</div>
<div class="c ac" style="left:270.30px;top:527.24px;width:51.20px;">$125</div>
<div class="c ac" style="left:321.50px;top:527.24px;width:51.00px;">$103</div>
<div class="c ac" style="left:372.50px;top:527.24px;width:51.10px;">$91</div>
<div class="c ac" style="left:474.60px;top:527.24px;width:84.70px;color:#cccccc;">$1,140</div>
<div class="c ac" style="left:559.30px;top:527.24px;width:67.50px;">$1,140</div>
<div class="c ac" style="left:626.80px;top:527.24px;width:67.70px;">$228</div>
<div class="c al" style="left:24.00px;top:549.85px;width:92.80px;">20</div>
<div class="c ac" style="left:116.80px;top:549.85px;width:51.10px;">$420</div>
<div class="c ac" style="left:167.90px;top:549.85px;width:51.30px;">$264</div>
<div class="c ac" style="left:219.20px;top:549.85px;width:51.10px;">$180</div>
<div class="c ac" style="left:270.30px;top:549.85px;width:51.20px;">$132</div>
<div class="c ac" style="left:321.50px;top:549.85px;width:51.00px;">$108</div>
<div class="c ac" style="left:372.50px;top:549.85px;width:51.10px;">$96</div>
<div class="c ac" style="left:474.60px;top:549.85px;width:84.70px;color:#cccccc;">$1,200</div>
<div class="c ac" style="left:559.30px;top:549.85px;width:67.50px;">$1,200</div>
<div class="c ac" style="left:626.80px;top:549.85px;width:67.70px;">$240</div>
<div class="c al" style="left:24.00px;top:572.46px;width:92.80px;">21</div>
<div class="c ac" style="left:116.80px;top:572.46px;width:51.10px;">$441</div>
<div class="c ac" style="left:167.90px;top:572.46px;width:51.30px;">$277</div>
<div class="c ac" style="left:219.20px;top:572.46px;width:51.10px;">$189</div>
<div class="c ac" style="left:270.30px;top:572.46px;width:51.20px;">$139</div>
<div class="c ac" style="left:321.50px;top:572.46px;width:51.00px;">$113</div>
<div class="c ac" style="left:372.50px;top:572.46px;width:51.10px;">$101</div>
<div class="c ac" style="left:474.60px;top:572.46px;width:84.70px;color:#cccccc;">$1,260</div>
<div class="c ac" style="left:559.30px;top:572.46px;width:67.50px;">$1,260</div>
<div class="c ac" style="left:626.80px;top:572.46px;width:67.70px;">$252</div>
<div class="c al" style="left:24.00px;top:595.07px;width:92.80px;">22</div>
<div class="c ac" style="left:116.80px;top:595.07px;width:51.10px;">$462</div>
<div class="c ac" style="left:167.90px;top:595.07px;width:51.30px;">$290</div>
<div class="c ac" style="left:219.20px;top:595.07px;width:51.10px;">$198</div>
<div class="c ac" style="left:270.30px;top:595.07px;width:51.20px;">$145</div>
<div class="c ac" style="left:321.50px;top:595.07px;width:51.00px;">$119</div>
<div class="c ac" style="left:372.50px;top:595.07px;width:51.10px;">$106</div>
<div class="c ac" style="left:474.60px;top:595.07px;width:84.70px;color:#cccccc;">$1,320</div>
<div class="c ac" style="left:559.30px;top:595.07px;width:67.50px;">$1,320</div>
<div class="c ac" style="left:626.80px;top:595.07px;width:67.70px;">$264</div>
<div class="c al" style="left:24.00px;top:617.68px;width:92.80px;">23</div>
<div class="c ac" style="left:116.80px;top:617.68px;width:51.10px;">$483</div>
<div class="c ac" style="left:167.90px;top:617.68px;width:51.30px;">$304</div>
<div class="c ac" style="left:219.20px;top:617.68px;width:51.10px;">$207</div>
<div class="c ac" style="left:270.30px;top:617.68px;width:51.20px;">$152</div>
<div class="c ac" style="left:321.50px;top:617.68px;width:51.00px;">$124</div>
<div class="c ac" style="left:372.50px;top:617.68px;width:51.10px;">$110</div>
<div class="c ac" style="left:474.60px;top:617.68px;width:84.70px;color:#cccccc;">$1,380</div>
<div class="c ac" style="left:559.30px;top:617.68px;width:67.50px;">$1,380</div>
<div class="c ac" style="left:626.80px;top:617.68px;width:67.70px;">$276</div>
<div class="c al" style="left:24.00px;top:640.29px;width:92.80px;">24</div>
<div class="c ac" style="left:116.80px;top:640.29px;width:51.10px;">$504</div>
<div class="c ac" style="left:167.90px;top:640.29px;width:51.30px;">$317</div>
<div class="c ac" style="left:219.20px;top:640.29px;width:51.10px;">$216</div>
<div class="c ac" style="left:270.30px;top:640.29px;width:51.20px;">$158</div>
<div class="c ac" style="left:321.50px;top:640.29px;width:51.00px;">$130</div>
<div class="c ac" style="left:372.50px;top:640.29px;width:51.10px;">$115</div>
<div class="c ac" style="left:474.60px;top:640.29px;width:84.70px;color:#cccccc;">$1,440</div>
<div class="c ac" style="left:559.30px;top:640.29px;width:67.50px;">$1,440</div>
<div class="c ac" style="left:626.80px;top:640.29px;width:67.70px;">$288</div>
<div class="c al" style="left:24.00px;top:662.90px;width:92.80px;">25</div>
<div class="c ac" style="left:116.80px;top:662.90px;width:51.10px;">$525</div>
<div class="c ac" style="left:167.90px;top:662.90px;width:51.30px;">$330</div>
<div class="c ac" style="left:219.20px;top:662.90px;width:51.10px;">$225</div>
<div class="c ac" style="left:270.30px;top:662.90px;width:51.20px;">$165</div>
<div class="c ac" style="left:321.50px;top:662.90px;width:51.00px;">$135</div>
<div class="c ac" style="left:372.50px;top:662.90px;width:51.10px;">$120</div>
<div class="c ac" style="left:474.60px;top:662.90px;width:84.70px;color:#cccccc;">$1,500</div>
<div class="c ac" style="left:559.30px;top:662.90px;width:67.50px;">$1,500</div>
<div class="c ac" style="left:626.80px;top:662.90px;width:67.70px;">$300</div>
<div class="c al" style="left:24.00px;top:685.51px;width:92.80px;">26</div>
<div class="c ac" style="left:116.80px;top:685.51px;width:51.10px;">$546</div>
<div class="c ac" style="left:167.90px;top:685.51px;width:51.30px;">$343</div>
<div class="c ac" style="left:219.20px;top:685.51px;width:51.10px;">$234</div>
<div class="c ac" style="left:270.30px;top:685.51px;width:51.20px;">$172</div>
<div class="c ac" style="left:321.50px;top:685.51px;width:51.00px;">$140</div>
<div class="c ac" style="left:372.50px;top:685.51px;width:51.10px;">$125</div>
<div class="c ac" style="left:474.60px;top:685.51px;width:84.70px;color:#cccccc;">$1,560</div>
<div class="c ac" style="left:559.30px;top:685.51px;width:67.50px;">$1,560</div>
<div class="c ac" style="left:626.80px;top:685.51px;width:67.70px;">$312</div>
<div class="c al" style="left:24.00px;top:708.12px;width:92.80px;">27</div>
<div class="c ac" style="left:116.80px;top:708.12px;width:51.10px;">$567</div>
<div class="c ac" style="left:167.90px;top:708.12px;width:51.30px;">$356</div>
<div class="c ac" style="left:219.20px;top:708.12px;width:51.10px;">$243</div>
<div class="c ac" style="left:270.30px;top:708.12px;width:51.20px;">$178</div>
<div class="c ac" style="left:321.50px;top:708.12px;width:51.00px;">$146</div>
<div class="c ac" style="left:372.50px;top:708.12px;width:51.10px;">$130</div>
<div class="c ac" style="left:474.60px;top:708.12px;width:84.70px;color:#cccccc;">$1,620</div>
<div class="c ac" style="left:559.30px;top:708.12px;width:67.50px;">$1,620</div>
<div class="c ac" style="left:626.80px;top:708.12px;width:67.70px;">$324</div>
<div class="c al" style="left:24.00px;top:731.53px;width:92.80px;">28</div>
<div class="c ac" style="left:116.80px;top:731.53px;width:51.10px;">$588</div>
<div class="c ac" style="left:167.90px;top:731.53px;width:51.30px;">$370</div>
<div class="c ac" style="left:219.20px;top:731.53px;width:51.10px;">$252</div>
<div class="c ac" style="left:270.30px;top:731.53px;width:51.20px;">$185</div>
<div class="c ac" style="left:321.50px;top:731.53px;width:51.00px;">$151</div>
<div class="c ac" style="left:372.50px;top:731.53px;width:51.10px;">$134</div>
<div class="c ac" style="left:474.60px;top:731.53px;width:84.70px;color:#cccccc;">$1,680</div>
<div class="c ac" style="left:559.30px;top:731.53px;width:67.50px;">$1,680</div>
<div class="c ac" style="left:626.80px;top:731.53px;width:67.70px;">$280</div>
<div class="c al" style="left:24.00px;top:754.14px;width:92.80px;">29</div>
<div class="c ac" style="left:116.80px;top:754.14px;width:51.10px;">$609</div>
<div class="c ac" style="left:167.90px;top:754.14px;width:51.30px;">$383</div>
<div class="c ac" style="left:219.20px;top:754.14px;width:51.10px;">$261</div>
<div class="c ac" style="left:270.30px;top:754.14px;width:51.20px;">$191</div>
<div class="c ac" style="left:321.50px;top:754.14px;width:51.00px;">$157</div>
<div class="c ac" style="left:372.50px;top:754.14px;width:51.10px;">$139</div>
<div class="c ac" style="left:474.60px;top:754.14px;width:84.70px;color:#cccccc;">$1,740</div>
<div class="c ac" style="left:559.30px;top:754.14px;width:67.50px;">$1,740</div>
<div class="c ac" style="left:626.80px;top:754.14px;width:67.70px;">$290</div>
<div class="c al" style="left:24.00px;top:776.75px;width:92.80px;">30</div>
<div class="c ac" style="left:116.80px;top:776.75px;width:51.10px;">$630</div>
<div class="c ac" style="left:167.90px;top:776.75px;width:51.30px;">$396</div>
<div class="c ac" style="left:219.20px;top:776.75px;width:51.10px;">$270</div>
<div class="c ac" style="left:270.30px;top:776.75px;width:51.20px;">$198</div>
<div class="c ac" style="left:321.50px;top:776.75px;width:51.00px;">$162</div>
<div class="c ac" style="left:372.50px;top:776.75px;width:51.10px;">$144</div>
<div class="c ac" style="left:474.60px;top:776.75px;width:84.70px;color:#c3c9d4;">$1,800</div>
<div class="c ac" style="left:559.30px;top:776.75px;width:67.50px;">$1,800</div>
<div class="c ac" style="left:626.80px;top:776.75px;width:67.70px;">$300</div>
<div class="c al" style="left:24.00px;top:799.36px;width:92.80px;">31</div>
<div class="c ac" style="left:116.80px;top:799.36px;width:51.10px;">$651</div>
<div class="c ac" style="left:167.90px;top:799.36px;width:51.30px;">$409</div>
<div class="c ac" style="left:219.20px;top:799.36px;width:51.10px;">$279</div>
<div class="c ac" style="left:270.30px;top:799.36px;width:51.20px;">$205</div>
<div class="c ac" style="left:321.50px;top:799.36px;width:51.00px;">$167</div>
<div class="c ac" style="left:372.50px;top:799.36px;width:51.10px;">$149</div>
<div class="c ac" style="left:474.60px;top:799.36px;width:84.70px;color:#cccccc;">$1,860</div>
<div class="c ac" style="left:559.30px;top:799.36px;width:67.50px;">$1,860</div>
<div class="c ac" style="left:626.80px;top:799.36px;width:67.70px;">$310</div>
<div class="c al" style="left:24.00px;top:821.97px;width:92.80px;">32</div>
<div class="c ac" style="left:116.80px;top:821.97px;width:51.10px;">$672</div>
<div class="c ac" style="left:167.90px;top:821.97px;width:51.30px;">$422</div>
<div class="c ac" style="left:219.20px;top:821.97px;width:51.10px;">$288</div>
<div class="c ac" style="left:270.30px;top:821.97px;width:51.20px;">$211</div>
<div class="c ac" style="left:321.50px;top:821.97px;width:51.00px;">$173</div>
<div class="c ac" style="left:372.50px;top:821.97px;width:51.10px;">$154</div>
<div class="c ac" style="left:474.60px;top:821.97px;width:84.70px;color:#cccccc;">$1,920</div>
<div class="c ac" style="left:559.30px;top:821.97px;width:67.50px;">$1,920</div>
<div class="c ac" style="left:626.80px;top:821.97px;width:67.70px;">$320</div>
<div class="c al" style="left:24.00px;top:844.58px;width:92.80px;">33</div>
<div class="c ac" style="left:116.80px;top:844.58px;width:51.10px;">$693</div>
<div class="c ac" style="left:167.90px;top:844.58px;width:51.30px;">$436</div>
<div class="c ac" style="left:219.20px;top:844.58px;width:51.10px;">$297</div>
<div class="c ac" style="left:270.30px;top:844.58px;width:51.20px;">$218</div>
<div class="c ac" style="left:321.50px;top:844.58px;width:51.00px;">$178</div>
<div class="c ac" style="left:372.50px;top:844.58px;width:51.10px;">$158</div>
<div class="c ac" style="left:474.60px;top:844.58px;width:84.70px;color:#cccccc;">$1,980</div>
<div class="c ac" style="left:559.30px;top:844.58px;width:67.50px;">$1,980</div>
<div class="c ac" style="left:626.80px;top:844.58px;width:67.70px;">$330</div>
<div class="c al" style="left:24.00px;top:867.19px;width:92.80px;">34</div>
<div class="c ac" style="left:116.80px;top:867.19px;width:51.10px;">$714</div>
<div class="c ac" style="left:167.90px;top:867.19px;width:51.30px;">$449</div>
<div class="c ac" style="left:219.20px;top:867.19px;width:51.10px;">$306</div>
<div class="c ac" style="left:270.30px;top:867.19px;width:51.20px;">$224</div>
<div class="c ac" style="left:321.50px;top:867.19px;width:51.00px;">$184</div>
<div class="c ac" style="left:372.50px;top:867.19px;width:51.10px;">$163</div>
<div class="c ac" style="left:474.60px;top:867.19px;width:84.70px;color:#cccccc;">$2,040</div>
<div class="c ac" style="left:559.30px;top:867.19px;width:67.50px;">$2,040</div>
<div class="c ac" style="left:626.80px;top:867.19px;width:67.70px;">$340</div>
<div class="c al" style="left:24.00px;top:889.80px;width:92.80px;">35</div>
<div class="c ac" style="left:116.80px;top:889.80px;width:51.10px;">$735</div>
<div class="c ac" style="left:167.90px;top:889.80px;width:51.30px;">$462</div>
<div class="c ac" style="left:219.20px;top:889.80px;width:51.10px;">$315</div>
<div class="c ac" style="left:270.30px;top:889.80px;width:51.20px;">$231</div>
<div class="c ac" style="left:321.50px;top:889.80px;width:51.00px;">$189</div>
<div class="c ac" style="left:372.50px;top:889.80px;width:51.10px;">$168</div>
<div class="c ac" style="left:474.60px;top:889.80px;width:84.70px;color:#cccccc;">$2,100</div>
<div class="c ac" style="left:559.30px;top:889.80px;width:67.50px;">$2,100</div>
<div class="c ac" style="left:626.80px;top:889.80px;width:67.70px;">$350</div>
<div class="c al" style="left:24.00px;top:912.41px;width:92.80px;">36</div>
<div class="c ac" style="left:116.80px;top:912.41px;width:51.10px;">$756</div>
<div class="c ac" style="left:167.90px;top:912.41px;width:51.30px;">$475</div>
<div class="c ac" style="left:219.20px;top:912.41px;width:51.10px;">$324</div>
<div class="c ac" style="left:270.30px;top:912.41px;width:51.20px;">$238</div>
<div class="c ac" style="left:321.50px;top:912.41px;width:51.00px;">$194</div>
<div class="c ac" style="left:372.50px;top:912.41px;width:51.10px;">$173</div>
<div class="c ac" style="left:474.60px;top:912.41px;width:84.70px;color:#cccccc;">$2,160</div>
<div class="c ac" style="left:559.30px;top:912.41px;width:67.50px;">$2,160</div>
<div class="c ac" style="left:626.80px;top:912.41px;width:67.70px;">$360</div>
<div class="c al" style="left:24.00px;top:935.02px;width:92.80px;">37</div>
<div class="c ac" style="left:116.80px;top:935.02px;width:51.10px;">$777</div>
<div class="c ac" style="left:167.90px;top:935.02px;width:51.30px;">$488</div>
<div class="c ac" style="left:219.20px;top:935.02px;width:51.10px;">$333</div>
<div class="c ac" style="left:270.30px;top:935.02px;width:51.20px;">$244</div>
<div class="c ac" style="left:321.50px;top:935.02px;width:51.00px;">$200</div>
<div class="c ac" style="left:372.50px;top:935.02px;width:51.10px;">$178</div>
<div class="c ac" style="left:474.60px;top:935.02px;width:84.70px;color:#cccccc;">$2,220</div>
<div class="c ac" style="left:559.30px;top:935.02px;width:67.50px;">$2,220</div>
<div class="c ac" style="left:626.80px;top:935.02px;width:67.70px;">$370</div>
<div class="c al" style="left:24.00px;top:957.63px;width:92.80px;">38</div>
<div class="c ac" style="left:116.80px;top:957.63px;width:51.10px;">$798</div>
<div class="c ac" style="left:167.90px;top:957.63px;width:51.30px;">$502</div>
<div class="c ac" style="left:219.20px;top:957.63px;width:51.10px;">$342</div>
<div class="c ac" style="left:270.30px;top:957.63px;width:51.20px;">$251</div>
<div class="c ac" style="left:321.50px;top:957.63px;width:51.00px;">$205</div>
<div class="c ac" style="left:372.50px;top:957.63px;width:51.10px;">$182</div>
<div class="c ac" style="left:474.60px;top:957.63px;width:84.70px;color:#cccccc;">$2,280</div>
<div class="c ac" style="left:559.30px;top:957.63px;width:67.50px;">$2,280</div>
<div class="c ac" style="left:626.80px;top:957.63px;width:67.70px;">$380</div>
<div class="c al" style="left:24.00px;top:980.24px;width:92.80px;">39</div>
<div class="c ac" style="left:116.80px;top:980.24px;width:51.10px;">$819</div>
<div class="c ac" style="left:167.90px;top:980.24px;width:51.30px;">$515</div>
<div class="c ac" style="left:219.20px;top:980.24px;width:51.10px;">$351</div>
<div class="c ac" style="left:270.30px;top:980.24px;width:51.20px;">$257</div>
<div class="c ac" style="left:321.50px;top:980.24px;width:51.00px;">$211</div>
<div class="c ac" style="left:372.50px;top:980.24px;width:51.10px;">$187</div>
<div class="c ac" style="left:474.60px;top:980.24px;width:84.70px;color:#cccccc;">$2,340</div>
<div class="c ac" style="left:559.30px;top:980.24px;width:67.50px;">$2,340</div>
<div class="c ac" style="left:626.80px;top:980.24px;width:67.70px;">$390</div>
<div class="c al" style="left:24.00px;top:1002.85px;width:92.80px;">40</div>
<div class="c ac" style="left:116.80px;top:1002.85px;width:51.10px;">$840</div>
<div class="c ac" style="left:167.90px;top:1002.85px;width:51.30px;">$528</div>
<div class="c ac" style="left:219.20px;top:1002.85px;width:51.10px;">$360</div>
<div class="c ac" style="left:270.30px;top:1002.85px;width:51.20px;">$264</div>
<div class="c ac" style="left:321.50px;top:1002.85px;width:51.00px;">$216</div>
<div class="c ac" style="left:372.50px;top:1002.85px;width:51.10px;">$192</div>
<div class="c ac" style="left:474.60px;top:1002.85px;width:84.70px;color:#cccccc;">$2,400</div>
<div class="c ac" style="left:559.30px;top:1002.85px;width:67.50px;">$2,400</div>
<div class="c ac" style="left:626.80px;top:1002.85px;width:67.70px;">$400</div>
<div class="c al" style="left:707.50px;top:208.30px;width:68.00px;">5-7</div>
<div class="c al" style="left:775.50px;top:208.30px;width:184.50px;padding-left:2.2px;">65/35</div>
<div class="c al" style="left:707.50px;top:276.93px;width:68.00px;">8-12</div>
<div class="c al" style="left:775.50px;top:276.93px;width:184.50px;padding-left:2.2px;">45/30/25</div>
<div class="c al" style="left:707.50px;top:390.78px;width:68.00px;">13-18</div>
<div class="c al" style="left:775.50px;top:390.78px;width:184.50px;padding-left:2.2px;">40/24/20/16</div>
<div class="c al" style="left:707.50px;top:527.24px;width:68.00px;">19-27</div>
<div class="c al" style="left:775.50px;top:527.24px;width:184.50px;padding-left:2.2px;">37/24/15/13/11</div>
<div class="c al" style="left:707.50px;top:731.53px;width:68.00px;">28-40</div>
<div class="c al" style="left:775.50px;top:731.53px;width:184.50px;padding-left:2.2px;">35/22/15/11/9/8</div>
<div class="ch" style="left:24.00px;width:92.80px">A</div>
<div class="ch" style="left:116.80px;width:51.10px">B</div>
<div class="ch" style="left:167.90px;width:51.30px">C</div>
<div class="ch" style="left:219.20px;width:51.10px">D</div>
<div class="ch" style="left:270.30px;width:51.20px">E</div>
<div class="ch" style="left:321.50px;width:51.00px">F</div>
<div class="ch" style="left:372.50px;width:51.10px">G</div>
<div class="ch" style="left:423.60px;width:51.00px">H</div>
<div class="ch" style="left:474.60px;width:84.70px">I</div>
<div class="ch" style="left:559.30px;width:67.50px">J</div>
<div class="ch" style="left:626.80px;width:67.70px">K</div>
<div class="ch" style="left:694.50px;width:13.00px">L</div>
<div class="ch" style="left:707.50px;width:68.00px">M</div>
<div class="ch" style="left:775.50px;width:83.80px">N</div>
<div class="ch" style="left:859.30px;width:85.20px">O</div>
<div class="rh" style="top:140.20px">1</div>
<div class="rh" style="top:163.00px">2</div>
<div class="rh" style="top:189.05px">3</div>
<div class="rh" style="top:212.40px">4</div>
<div class="rh" style="top:235.01px">5</div>
<div class="rh" style="top:257.62px">6</div>
<div class="rh" style="top:280.63px">7</div>
<div class="rh" style="top:303.64px">8</div>
<div class="rh" style="top:326.25px">9</div>
<div class="rh" style="top:348.87px">10</div>
<div class="rh" style="top:371.48px">11</div>
<div class="rh" style="top:394.49px">12</div>
<div class="rh" style="top:417.50px">13</div>
<div class="rh" style="top:440.11px">14</div>
<div class="rh" style="top:462.71px">15</div>
<div class="rh" style="top:485.32px">16</div>
<div class="rh" style="top:507.93px">17</div>
<div class="rh" style="top:530.94px">18</div>
<div class="rh" style="top:553.95px">19</div>
<div class="rh" style="top:576.57px">20</div>
<div class="rh" style="top:599.17px">21</div>
<div class="rh" style="top:621.78px">22</div>
<div class="rh" style="top:644.39px">23</div>
<div class="rh" style="top:667.00px">24</div>
<div class="rh" style="top:689.62px">25</div>
<div class="rh" style="top:712.22px">26</div>
<div class="rh" style="top:735.24px">27</div>
<div class="rh" style="top:758.25px">28</div>
<div class="rh rs" style="top:780.06px">29</div>
<div class="rh" style="top:803.47px">30</div>
<div class="rh" style="top:826.08px">31</div>
<div class="rh" style="top:848.68px">32</div>
<div class="rh" style="top:871.30px">33</div>
<div class="rh" style="top:893.90px">34</div>
<div class="rh" style="top:916.52px">35</div>
<div class="rh" style="top:939.12px">36</div>
<div class="rh" style="top:961.74px">37</div>
<div class="rh" style="top:984.35px">38</div>
<div class="rh" style="top:1006.96px">39</div>
</body></html>
